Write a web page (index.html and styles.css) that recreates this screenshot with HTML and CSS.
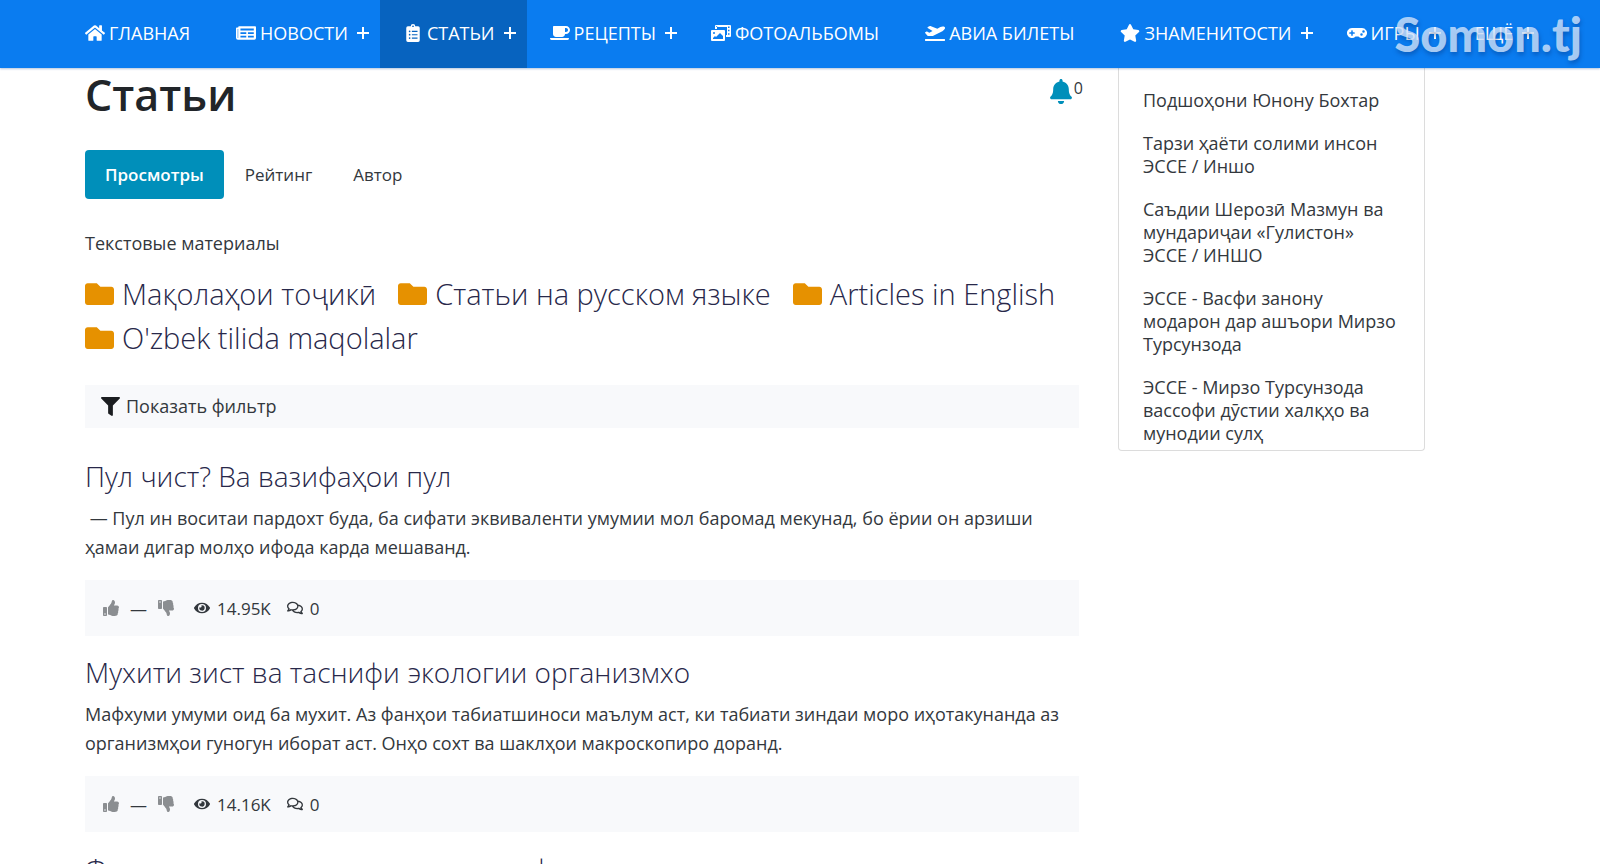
FILE: index.html
```html
<!DOCTYPE html>
<html lang="ru">
<head>
<meta charset="utf-8">
<meta name="viewport" content="width=device-width, initial-scale=1">
<title>Статьи</title>
<link rel="stylesheet" href="styles.css">
</head>
<body>
<svg class="sprite" aria-hidden="true">
  <symbol id="home" viewBox="0 0 576 512"><path d="M280.37 148.26L96 300.11V464a16 16 0 0 0 16 16l112.06-.29a16 16 0 0 0 15.92-16V368a16 16 0 0 1 16-16h64a16 16 0 0 1 16 16v95.64a16 16 0 0 0 16 16.05L464 480a16 16 0 0 0 16-16V300L295.67 148.26a12.19 12.19 0 0 0-15.3 0zM571.6 251.47L488 182.56V44.05a12 12 0 0 0-12-12h-56a12 12 0 0 0-12 12v72.61L318.47 43a48 48 0 0 0-61 0L4.34 251.47a12 12 0 0 0-1.6 16.9l25.5 31A12 12 0 0 0 45.15 301l235.22-193.74a12.19 12.19 0 0 1 15.3 0L530.9 301a12 12 0 0 0 16.9-1.6l25.5-31a12 12 0 0 0-1.7-16.93z"/></symbol>
  <symbol id="news" viewBox="0 0 576 512"><path fill-rule="evenodd" d="M552 64H88a24 24 0 0 0-24 24v8H24a24 24 0 0 0-24 24v272a56 56 0 0 0 56 56h472a48 48 0 0 0 48-48V88a24 24 0 0 0-24-24zM48 392V144h16v248a8 8 0 0 1-16 0zM128 128h384v56H128zM128 232h168v52H128zM128 332h168v52H128zM344 232h168v52H344zM344 332h168v52H344z"/></symbol>
  <symbol id="list" viewBox="0 0 384 512"><path fill-rule="evenodd" d="M336 64h-80a64 64 0 0 0-128 0H48a48 48 0 0 0-48 48v352a48 48 0 0 0 48 48h288a48 48 0 0 0 48-48V112a48 48 0 0 0-48-48zM96 424a24 24 0 1 1 0-48 24 24 0 0 1 0 48zm0-96a24 24 0 1 1 0-48 24 24 0 0 1 0 48zm0-96a24 24 0 1 1 0-48 24 24 0 0 1 0 48zM192 40a24 24 0 1 1 0 48 24 24 0 0 1 0-48zM160 384h160v32H160zM160 288h160v32H160zM160 192h160v32H160z"/></symbol>
  <symbol id="coffee" viewBox="0 0 640 512"><path d="M192 384h192c53 0 96-43 96-96h32c70.6 0 128-57.4 128-128S582.6 32 512 32H120c-13.3 0-24 10.7-24 24v232c0 53 43 96 96 96zM512 96c35.3 0 64 28.7 64 64s-28.7 64-64 64h-32V96h32zm47.7 384H48.3c-47.6 0-61-64-36-64h583.3c25 0 11.8 64-35.9 64z"/></symbol>
  <symbol id="photos" viewBox="0 0 640 512"><path fill-rule="evenodd" d="M608 0H160a32 32 0 0 0-32 32v96h64V64h320v256h-32v64h128a32 32 0 0 0 32-32V32a32 32 0 0 0-32-32zM544 48h48v48h-48zM544 152h48v48h-48zM544 264h48v48h-48zM160 32h40v24h-40z"/><path fill-rule="evenodd" d="M416 160H32a32 32 0 0 0-32 32v288a32 32 0 0 0 32 32h384a32 32 0 0 0 32-32V192a32 32 0 0 0-32-32zM96 224a32 32 0 1 1 0 64 32 32 0 0 1 0-64zM384 448H64v-32l64-64 32 32 128-128 96 96z"/></symbol>
  <symbol id="plane" viewBox="0 0 640 512"><path d="M624 448H16c-8.84 0-16 7.16-16 16v32c0 8.84 7.16 16 16 16h608c8.84 0 16-7.16 16-16v-32c0-8.84-7.16-16-16-16zM80.55 341.27c6.28 6.84 15.1 10.72 24.33 10.71l130.54-.18a65.62 65.62 0 0 0 29.64-7.12l290.96-147.65c26.74-13.57 50.71-32.94 67.02-58.31 18.31-28.48 20.3-49.09 13.07-63.65-7.21-14.57-24.74-25.27-58.25-27.45-29.85-1.94-59.54 5.92-86.28 19.48l-98.51 49.99-218.7-82.06a17.8 17.8 0 0 0-18-1.11L90.62 67.29c-10.67 5.41-13.25 19.65-5.17 28.53l156.22 98.1-103.21 52.38-72.35-36.47a17.8 17.8 0 0 0-16.07.02L9.91 230.22c-10.44 5.3-13.19 19.12-5.57 28.08l76.21 82.97z"/></symbol>
  <symbol id="star" viewBox="0 0 576 512"><path d="M259.3 17.8L194 150.2 47.9 171.5c-26.2 3.8-36.7 36.1-17.7 54.6l105.7 103-25 145.5c-4.5 26.3 23.2 46 46.4 33.7L288 439.6l130.7 68.7c23.2 12.2 50.9-7.4 46.4-33.7l-25-145.5 105.7-103c19-18.5 8.5-50.8-17.7-54.6L382 150.2 316.7 17.8c-11.7-23.6-45.6-23.9-57.4 0z"/></symbol>
  <symbol id="gamepad" viewBox="0 0 640 512"><path d="M480.07 96H160a160 160 0 1 0 114.24 272h91.5A160 160 0 1 0 480.07 96zM248 268a12 12 0 0 1-12 12h-52v52a12 12 0 0 1-12 12h-24a12 12 0 0 1-12-12v-52H84a12 12 0 0 1-12-12v-24a12 12 0 0 1 12-12h52v-52a12 12 0 0 1 12-12h24a12 12 0 0 1 12 12v52h52a12 12 0 0 1 12 12zm216 76a40 40 0 1 1 40-40 40 40 0 0 1-40 40zm64-96a40 40 0 1 1 40-40 40 40 0 0 1-40 40z"/></symbol>
  <symbol id="plus" viewBox="0 0 12 12"><path d="M5 0h2v5h5v2H7v5H5V7H0V5h5z"/></symbol>
  <symbol id="bell" viewBox="0 0 448 512"><path d="M224 512c35.32 0 63.97-28.65 63.97-64H160.03c0 35.35 28.65 64 63.97 64zm215.39-149.71c-19.32-20.76-55.47-51.99-55.47-154.29 0-77.7-54.48-139.9-127.94-155.16V32c0-17.67-14.32-32-31.98-32s-31.98 14.33-31.98 32v20.84C118.56 68.1 64.08 130.3 64.08 208c0 102.3-36.15 133.53-55.47 154.29-6 6.45-8.66 14.16-8.61 21.71.11 16.4 12.98 32 32.1 32h383.8c19.12 0 32-15.6 32.1-32 .05-7.55-2.61-15.27-8.61-21.71z"/></symbol>
  <symbol id="folder" viewBox="0 64 512 384"><path d="M464 128H272l-64-64H48C21.49 64 0 85.49 0 112v288c0 26.51 21.49 48 48 48h416c26.51 0 48-21.49 48-48V176c0-26.51-21.49-48-48-48z"/></symbol>
  <symbol id="filter" viewBox="0 0 512 512"><path d="M487.976 0H24.028C2.71 0-8.047 25.866 7.058 40.971L192 225.941V432c0 7.831 3.821 15.17 10.237 19.662l80 55.98C298.02 518.69 320 507.493 320 487.98V225.941l184.947-184.97C520.021 25.896 509.338 0 487.976 0z"/></symbol>
  <symbol id="thumb" viewBox="0 0 512 512"><path d="M104 224H24c-13.255 0-24 10.745-24 24v240c0 13.255 10.745 24 24 24h80c13.255 0 24-10.745 24-24V248c0-13.255-10.745-24-24-24zM64 472c-13.255 0-24-10.745-24-24s10.745-24 24-24 24 10.745 24 24-10.745 24-24 24zM384 81.452c0 42.416-25.97 66.208-33.277 94.548h101.723c33.397 0 59.397 27.746 59.553 58.098.084 17.938-7.546 37.249-19.439 49.197l-.11.11c9.836 23.337 8.237 56.037-9.308 79.469 8.681 25.895-.069 57.704-16.382 74.757 4.298 17.598 2.244 32.575-6.148 44.632C440.202 511.587 389.616 512 346.839 512l-2.845-.001c-48.287-.017-87.806-17.598-119.56-31.725-15.957-7.099-36.821-15.887-52.651-16.178-6.54-.12-11.783-5.457-11.783-11.998v-213.77c0-3.2 1.282-6.271 3.558-8.521 39.614-39.144 56.648-80.587 89.117-113.111 14.804-14.832 20.188-37.236 25.393-58.902C282.515 39.293 291.817 0 312 0c24 0 72 8 72 81.452z"/></symbol>
  <symbol id="eye" viewBox="0 0 576 512"><path d="M572.52 241.4C518.29 135.59 410.93 64 288 64S57.68 135.64 3.48 241.41a32.35 32.35 0 0 0 0 29.19C57.71 376.41 165.07 448 288 448s230.32-71.64 284.52-177.41a32.35 32.35 0 0 0 0-29.19zM288 400a144 144 0 1 1 144-144 143.93 143.93 0 0 1-144 144zm0-240a95.31 95.31 0 0 0-25.31 3.79 47.85 47.85 0 0 1-66.9 66.9A95.78 95.78 0 1 0 288 160z"/></symbol>
  <symbol id="comments" viewBox="0 0 576 512"><path d="M532 386.2c27.5-27.1 44-61.1 44-98.2 0-80-76.5-146.1-176.2-157.9C368.3 72.5 294.3 32 208 32 93.1 32 0 103.6 0 192c0 37 16.5 71 44 98.2-15.3 30.7-37.3 54.5-37.7 54.9-6.3 6.7-8.1 16.5-4.4 25 3.6 8.5 12 14 21.2 14 53.5 0 96.7-20.2 125.2-38.8 9.2 2.1 18.7 3.7 28.4 4.9C208.1 407.6 281.8 448 368 448c20.8 0 40.8-2.4 59.8-6.8C456.3 459.7 499.4 480 553 480c9.2 0 17.5-5.5 21.2-14 3.6-8.5 1.9-18.3-4.4-25-.4-.3-22.5-24.1-37.8-54.8zm-392.8-92.3L122.1 305c-14.1 9.1-28.5 16.3-43.1 21.4 2.7-4.7 5.4-9.7 8-14.8l15.5-31.1L77.7 256C64.2 242.6 48 220.7 48 192c0-60.7 73.3-112 160-112s160 51.3 160 112-73.3 112-160 112c-16.5 0-33-1.9-49-5.6l-19.8-4.5zM498.3 352l-24.7 24.4 15.5 31.1c2.6 5.1 5.3 10.1 8 14.8-14.6-5.1-29-12.3-43.1-21.4l-17.1-11.1-19.9 4.6c-16 3.7-32.5 5.6-49 5.6-54 0-102.2-20.1-131.3-49.7C338 339.5 416 272.9 416 192c0-3.4-.4-6.7-.7-10C479.7 196.5 528 238.8 528 288c0 28.7-16.2 50.6-29.7 64z"/></symbol>
</svg>

<header class="topbar">
  <nav class="menu">
    <a class="menu-item" href="#"><svg class="menu-icon"><use href="#home"/></svg>ГЛАВНАЯ</a>
    <a class="menu-item has-sub" href="#"><svg class="menu-icon"><use href="#news"/></svg>НОВОСТИ<svg class="plus"><use href="#plus"/></svg></a>
    <a class="menu-item has-sub active" href="#"><svg class="menu-icon"><use href="#list"/></svg>СТАТЬИ<svg class="plus"><use href="#plus"/></svg></a>
    <a class="menu-item has-sub" href="#"><svg class="menu-icon"><use href="#coffee"/></svg>РЕЦЕПТЫ<svg class="plus"><use href="#plus"/></svg></a>
    <a class="menu-item" href="#"><svg class="menu-icon"><use href="#photos"/></svg>ФОТОАЛЬБОМЫ</a>
    <a class="menu-item" href="#"><svg class="menu-icon"><use href="#plane"/></svg>АВИА БИЛЕТЫ</a>
    <a class="menu-item has-sub" href="#"><svg class="menu-icon"><use href="#star"/></svg>ЗНАМЕНИТОСТИ<svg class="plus"><use href="#plus"/></svg></a>
    <a class="menu-item has-sub" href="#"><svg class="menu-icon"><use href="#gamepad"/></svg>ИГРЫ<svg class="plus"><use href="#plus"/></svg></a>
    <a class="menu-item has-sub" href="#">ЕЩЁ<svg class="plus"><use href="#plus"/></svg></a>
  </nav>
  <span class="watermark">Somon.tj</span>
</header>

<div class="page">
  <main class="content">
    <div class="heading">
      <h1 class="title">Статьи</h1>
      <a class="subscribe" href="#" aria-label="Подписка"><svg class="bell"><use href="#bell"/></svg><span class="count">0</span></a>
    </div>
    <nav class="tabs">
      <a class="tab current" href="#">Просмотры</a>
      <a class="tab" href="#">Рейтинг</a>
      <a class="tab" href="#">Автор</a>
    </nav>
    <p class="intro">Текстовые материалы</p>
    <ul class="folders">
      <li><a class="folder" href="#"><svg class="folder-icon"><use href="#folder"/></svg>Мақолаҳои тоҷикӣ</a></li>
      <li><a class="folder" href="#"><svg class="folder-icon"><use href="#folder"/></svg>Статьи на русском языке</a></li>
      <li><a class="folder" href="#"><svg class="folder-icon"><use href="#folder"/></svg>Articles in English</a></li>
      <li><a class="folder" href="#"><svg class="folder-icon"><use href="#folder"/></svg>O'zbek tilida maqolalar</a></li>
    </ul>
    <button class="filter" type="button"><svg class="filter-icon"><use href="#filter"/></svg>Показать фильтр</button>

    <article class="post">
      <h2 class="post-title"><a href="#">Пул чист? Ва вазифаҳои пул</a></h2>
      <p class="post-text">&nbsp;— Пул ин воситаи пардохт буда, ба сифати эквиваленти умумии мол баромад мекунад, бо ёрии он арзиши ҳамаи дигар молҳо ифода карда мешаванд.</p>
      <div class="stats">
        <button class="vote" type="button" aria-label="Нравится"><svg class="stat-icon"><use href="#thumb"/></svg></button>
        <span class="score">—</span>
        <button class="vote down" type="button" aria-label="Не нравится"><svg class="stat-icon"><use href="#thumb"/></svg></button>
        <span class="stat views"><svg class="stat-icon"><use href="#eye"/></svg>14.95K</span>
        <a class="stat" href="#"><svg class="stat-icon"><use href="#comments"/></svg>0</a>
      </div>
    </article>
    <article class="post">
      <h2 class="post-title"><a href="#">Мухити зист ва таснифи экологии организмхо</a></h2>
      <p class="post-text">Мафхуми умуми оид ба мухит. Аз фанҳои табиатшиноси маълум аст, ки табиати зиндаи моро иҳотакунанда аз организмҳои гуногун иборат аст. Онҳо сохт ва шаклҳои макроскопиро доранд.</p>
      <div class="stats">
        <button class="vote" type="button" aria-label="Нравится"><svg class="stat-icon"><use href="#thumb"/></svg></button>
        <span class="score">—</span>
        <button class="vote down" type="button" aria-label="Не нравится"><svg class="stat-icon"><use href="#thumb"/></svg></button>
        <span class="stat views"><svg class="stat-icon"><use href="#eye"/></svg>14.16K</span>
        <a class="stat" href="#"><svg class="stat-icon"><use href="#comments"/></svg>0</a>
      </div>
    </article>
    <article class="post">
      <h2 class="post-title"><a href="#">Фасли зимистони ва аҳамияти он ф</a></h2>
    </article>
  </main>

  <aside class="sidebar">
    <ul class="links">
      <li><a href="#">Подшоҳони Юнону Бохтар</a></li>
      <li><a href="#">Тарзи ҳаёти солими инсон ЭССЕ / Иншо</a></li>
      <li><a href="#">Саъдии Шерозӣ Мазмун ва мундариҷаи «Гулистон» ЭССЕ&nbsp;/&nbsp;ИНШО</a></li>
      <li><a href="#">ЭССЕ - Васфи занону модарон дар ашъори Мирзо Турсунзода</a></li>
      <li><a href="#">ЭССЕ - Мирзо Турсунзода вассофи дӯстии халқҳо ва мунодии сулҳ</a></li>
    </ul>
  </aside>
</div>
</body>
</html>
```
FILE: styles.css
```css
* { box-sizing: border-box; }
html { height: 100%; }
body {
  height: 100%;
  margin: 0;
  overflow: hidden;
  background: #fff;
  color: #33383d;
  font: 18px/29px "Open Sans", "Noto Sans", sans-serif;
}
h1, h2, p, ul { margin: 0; padding: 0; }
ul { list-style: none; }
a { color: inherit; text-decoration: none; }
button { border: 0; background: none; color: inherit; font: inherit; padding: 0; text-align: left; }
svg { fill: currentColor; flex: none; display: block; }
.sprite { position: absolute; width: 0; height: 0; }

.topbar {
  position: relative;
  z-index: 1;
  background: #0a7cf0;
  color: #fff;
  box-shadow: 0 1px 2px rgba(0, 60, 140, .3);
}
.menu { display: flex; height: 68px; padding-left: 62px; }
.menu-item {
  display: flex;
  align-items: center;
  gap: 4px;
  padding: 0 23px 2px;
  white-space: nowrap;
}
.menu-item.has-sub { padding-right: 11px; }
.menu-item.active { background: #0763bf; }
.menu-icon { width: 20px; height: 18px; }
.plus { width: 12px; height: 12px; margin-left: 5px; }
.watermark {
  position: absolute;
  top: 0;
  right: 18px;
  color: rgba(220, 235, 255, .75);
  font: 900 47px/68px Lato, sans-serif;
  text-shadow: 1px 3px 4px rgba(0, 40, 110, .35);
}

.page {
  display: grid;
  grid-template-columns: minmax(0, 994px) 307px;
  gap: 39px;
  align-items: start;
  padding: 0 85px;
}
.heading { display: flex; justify-content: space-between; align-items: flex-start; }
.title { color: #212529; font-size: 43px; line-height: 54px; font-weight: 600; }
.subscribe { display: flex; align-items: flex-start; gap: 2px; margin-right: -4px; padding-top: 11px; }
.bell { width: 22px; height: 25px; color: #008fba; }
.count { font-size: 16px; line-height: 18px; }

.tabs { display: flex; gap: 1px; margin-top: 28px; font-size: 17px; }
.tab { padding: 10px 20px; border-radius: 4px; }
.tab.current { background: #008fba; color: #fff; font-weight: 600; }
.intro { margin-top: 30px; }
.folders { display: flex; flex-wrap: wrap; column-gap: 22px; margin-top: 14px; }
.folder {
  display: flex;
  align-items: center;
  gap: 8px;
  color: #28284a;
  font-size: 29px;
  line-height: 44px;
  font-weight: 300;
}
.folder-icon { width: 29px; height: 22px; color: #e69100; }
.filter {
  display: flex;
  align-items: center;
  gap: 6px;
  width: 100%;
  margin-top: 25px;
  padding: 7px 16px;
  background: #f8f9fb;
}
.filter-icon { width: 19px; height: 19px; color: #1b1d20; }

.post { padding-top: 30px; }
.post + .post { padding-top: 18px; }
.post-title { color: #28284a; font-size: 28px; line-height: 36px; font-weight: 300; }
.post-text { margin-top: 10px; }
.stats {
  display: flex;
  align-items: center;
  height: 56px;
  margin-top: 18px;
  padding: 0 18px;
  background: #f8f9fb;
  font-size: 17px;
}
.stat-icon { width: 16px; height: 16px; }
.vote { color: #8b8e91; }
.vote.down { transform: scaleY(-1); }
.score { padding: 0 11px; }
.stat { display: flex; align-items: center; gap: 7px; margin-left: 16px; }
.stat.views { margin-left: 20px; }

.sidebar { border: 1px solid #dcdcdc; border-top: 0; border-radius: 0 0 4px 4px; }
.links { display: grid; gap: 20px; padding: 21px 23px 5px 24px; line-height: 23px; }
```
